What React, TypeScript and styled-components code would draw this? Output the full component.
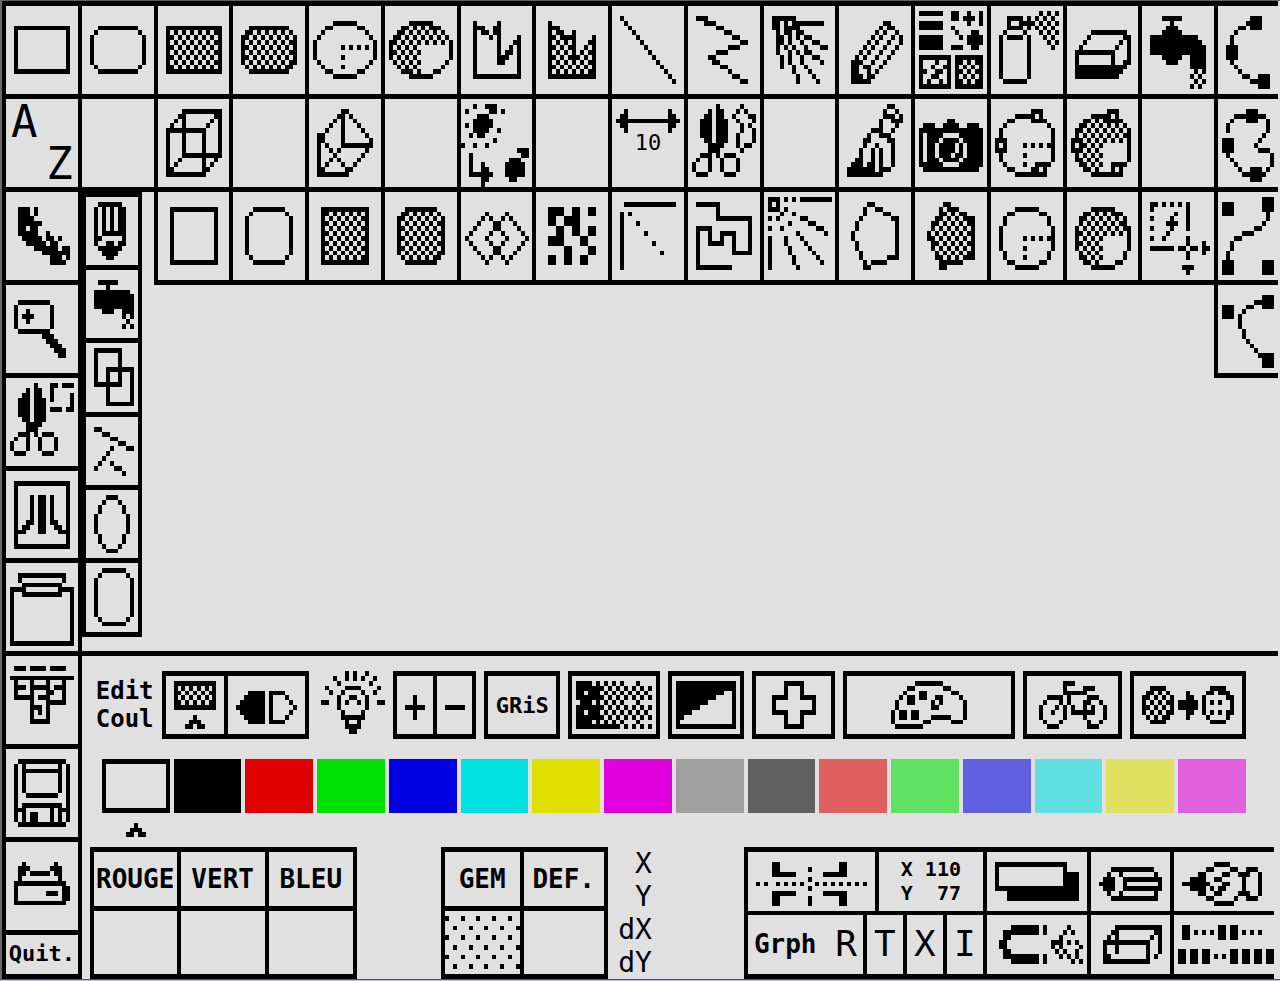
import React from "react";
import styled, { createGlobalStyle } from "styled-components";

const INK = "#000000";
const PAPER = "#e0e0e0";

const GlobalStyle = createGlobalStyle`
  *, *::before, *::after { box-sizing: border-box; }
  html, body { margin: 0; background: ${PAPER}; }
  body { color: ${INK}; font-family: "DejaVu Sans Mono", "Liberation Mono", monospace; }
  button { font: inherit; color: inherit; }
`;

/* ---------- pixel art ---------- */

/*
 * A drawing is a list of "rows:columns" groups. Rows and columns are
 * comma separated numbers or ranges; "~" dithers a column range with the
 * odd checker phase and "^" with the even one.
 */
const range = (s: string): [number, number] => {
  const [a, b] = s.split("-").map(Number);
  return [a, b === undefined ? a : b];
};

const toPath = (art: string): string => {
  let d = "";
  for (const group of art.trim().split(/\s+/)) {
    const [rows, cols] = group.split(":");
    for (const r of rows.split(",")) {
      const [y0, y1] = range(r);
      for (let y = y0; y <= y1; y++) {
        for (const c of cols.split(",")) {
          const phase = c[0] === "~" ? 1 : c[0] === "^" ? 0 : -1;
          const [x0, x1] = range(phase < 0 ? c : c.slice(1));
          if (phase < 0) {
            d += `M${x0} ${y}h${x1 - x0 + 1}v1h-${x1 - x0 + 1}z`;
          } else {
            for (let x = x0; x <= x1; x++) {
              if ((x + y) % 2 === phase) d += `M${x} ${y}h1v1h-1z`;
            }
          }
        }
      }
    }
  }
  return d;
};

const Svg = styled.svg`
  display: block;
  width: 100%;
  height: 100%;
  min-width: 0;
  min-height: 0;
  fill: ${INK};
  shape-rendering: crispEdges;
`;

const Pixels = ({ art, w = 18, h = 18 }: { art: string; w?: number; h?: number }) => (
  <Svg viewBox={`0 0 ${w} ${h}`} preserveAspectRatio="none" aria-hidden="true">
    <path d={toPath(art)} />
  </Svg>
);

const SCISSORS =
  "1:7 2:5,7-8 3:4-5,7-8 4-7:3-5,7-9 8:4-5,7-9 9:5-8 10:5-7 11:3-5,7,9-11 12:2,5,8,12 13-14:1,5,8,12 15:2-4,9-11";
const ROUND_SHELL = "3,15:6-11 4,14:4-5,12-13 5-6,12-13:3,14 7-11:2,15";

const ART = {
  rect: "4,13:2-15 5-12:2,15",
  round: "4,13:4-13 5,12:3,14 6-11:2,15",
  rectFill: "4,13:2-15 5-12:2,~3-14,15",
  roundFill: "4,13:4-13 5,12:3,~4-13,14 6-11:2,~3-14,15",
  pie: "3,14:6-11 4,13:4-5,12-13 5,12:3,14 6,11:2,15 7-10:1,16 8:8,10,12,14 10,12:8",
  pieFill:
    "3,14:6-11 4:4-5,~6-11,12-13 5:3,~4-13,14 6:2,~3-14,15 7:1,~2-15,16 8-10:1,~2-8,16 11:2,~3-8,15 12:3,~4-8,14 13:4-5,~6-8,12-13",
  curve:
    "3-14:3 3:9 4:4-5,8-9 5:5-6,8-9 6:7,9,14 7:9,13-14 8:9,12,14 9:9,11-12,14 10:9-11,14 11:9-10,14 12-13:14 14:3-14",
  curveFill:
    "3-14:3 4:4-5 5:^4,5-6,9 6:^4-5,6-9,14 7:^4-8,9,13-14 8:^4-8,9,12,^13,14 9:^4-8,9,11,^12-13,14 10:^4-8,9-10,^11-13,14 11-13:^4-13,14 14:3-14",
  line: "2:2 3:3 4:4 5:5 6:6 7:7 8:8 9:9 10:10 11:11 12:12 13:13 14:14 15:15",
  zigzag: "2:2-4 3:4-6 4:7-8 5:9-10 6:11-12 7:13-14 8:10-12 9:7-9 10:5-6 11:6-7 12:8-9 13:10 14:11-12 15:13-14",
  rays:
    "2:2-7 3:2-3,5,7-14 4:2-3,5-8 5:3,5-6,8-9 6:3-4,6,8,10-11 7:3-4,6,9,12-13 8:3,5,7,10,14-15 9:3,6,8,10-11 10:4,6,9,12-13 11:4,6,9,14 12:4,7,10 13:7,11 14:8,12 15:8,13",
  pencil:
    "3:11-12 4:10,12-13 5:9,11,14 6:8,10,13,15 7:7,9,12,15 8:6,8,11,14 9:5,7,10,13 10:4,6,9,12 11:3-5,8,11 12:3-4,6-7,10 13:3-4,7,9 14:3-5,7-8 15:3-7",
  options:
    "1,3-4,6-8:1-6 1-2:9-10 1,3:13 2:12-14 1-3:16 4:9 5:10 6:11 5,8:14-15 6-7:13-16 8:9-11 10,16:1-8,10-16 11-15:1,8,10,^11-15,16 11:5 12:4,7 13:2,5-6 14:4-5 15:3,6",
  spray: "2,4:4-7 3:4,7-10 2,4:9 5:3,8 6:4-7 6-14:2,9 15:3-8 1:~12-16 2:~11-16 3-4:~11-16 5:~12-16 6:~13-16 7:~14-16 8:15",
  eraser: "5:6-14 6:5,14-15 7:4,13,15 8:3,12,15 9:2-11,15 10:2,11,15 11:2,11,14-15 12:2-14 13:2-13 14:2-12",
  tap: "2:5-9 3:7 4:6-8 5:5-9 6:2-13 7:2-14 8-9:2-15 10:5-9,12-15 11:6-8,12-15 12:12-15 13-16:^12-15",
  bezier1: "2-4:8-10 3:7 4:5-6 5:4 6-7:3 8-10:2-4 11:3 12:4 13:5 14:6-7 15:8-9 14-16:10-12",
  cube: "2,11:6-15 3-10:6,15 6,15:2-11 7-14:2,11 3:5,14 4:4,13 5:3,12 12:5,14 13:4,13 14:3,12",
  prism:
    "2:8-9 3:7-8,10 4:6,8,11 5:5,8,12 6:4,8,13 7:2-3,8,14 8:2-3,8,15 9:2,4,8-15 10:2,5,7,14 11:2,6,13 12:2,5,7,12 13:2,4,8,11 14:2-3,9-10 15:2-9",
  bombs:
    "1:3,6-8 2:1,7-8,10 3:4-6 4:3-7 5:1,3-7 6:3-6,9 7:2,4-5 8:8 9:0,3,6 10:14-16 11:2,15-16 12:2,12-14 13-15:2,11-15 13:5 14:5-6 15:2-7 16:5-6,12-13 17:5",
  span: "0,4:3,14 1,3:2-3,14-15 2:1-16",
  lasso:
    SCISSORS + " 1:13 2:12,14 3:11,15-16 4:12,16 5:13,15 6:13,16 7-8:12,16 9:12,14-15 10:13",
  brush:
    "1:12-13 2:11,14 3:11-13,15 4:10,13-15 5:10,14 6:8-10,13 7:7,10-12 8:6-7,12-13 9:6,9,13 10:5,8,10,13 11:5,8,10,13 12:4-5,8,10,13 13:3-5,7-8,10,13 14:2-8,10-12 15:2-10",
  camera:
    "4:8-9 5:2-4,7-10,13-15 6:1-16 7:1,3-6,11-16 8:1,3-5,7-10,12-16 9-10:1,3-4,6-9,11,13-16 11:1,3-4,6-8,10-11,13-16 12:1,3-5,7-10,12-16 13:1-6,11-16 14:2-15",
  arc: "2:10-12 3:6-10,12 4:4-5,10-13 5:3,14 6-7:2,15 8,10:1-3,15 9:1,3,8,10,12,14-15 11:2,8,15 12:2,15 13:3,8,11-14 14:4-5,10-11,13 15:6-13",
  arcFill:
    "2:10-12 3:6-10,12 4:4-5,~6-9,10-13 5:3,~4-13,14 6-7:2,~3-14,15 8:1-3,~4-14,15 9:1,3,~4-8,15 10:1-3,~4-8,15 11-12:2,~3-8,15 13:3,~4-8,11-14 14:4-5,~6-8,11,13 15:6-13",
  bezier2: "2-4:7-9 3:4-6,10-11 4:3,12 5-6:2,12 7:11 8-10:1-3 8:10 9:9 10:10-12 11:2,13 12:3,13 13:4,13 14:5,8-10,12 15:6-11 16:8-10",
  film: "3-4:3-5,7 5:3-6 6:3-8 7:3-4,6-7 8:3-7,10 9:4-8,10-11,13 10:5-9,11-12 11:7-12,14-15 12:9-15 13:11-13,15 14:11-14",
  tallRect: "3,14:3-14 4-13:3,14",
  tallRound: "3,14:5-12 4,13:4,13 5-12:3,14",
  tallRectFill: "3,14:3-14 4-13:3,^4-13,14",
  tallRoundFill: "3,14:5-12 4,13:4,~5-12,13 5-12:3,~4-13,14",
  diamonds:
    "4,14:6,11 5,13:5,7,10,12 6,12:4,8-9,13 7,11:3,8-9,14 8,10:2,7,10,15 9:1,6,11,16",
  mosaic: "3-4:3-6,9-10,13-14 5-6:3-4,7-10 7-8:5-6,9-10,13-14 9-10:3-6,11-12 11-12:7-8,13-14 13-14:3-4,7-8,11-12",
  fan: "2:3-15 4-15:2 4:4 6:6 8:8 10:10 12:12",
  maze: "2:2-7 3-4:7 5:7-15 6-11:15 12:11-15 9-11:11 8:8-11 9:8 10:5-8 8-9:5 7:2-5 8-14:2 15:2-10",
  burst:
    "1,3:1-3 2:1,3 1:5,7,9-16 3:5 4:4,7 5:1,3,9-10 6:6,11-12 7:1,4,13-14 8:8,15 9-15:1 9:5,9 10:5,10 11:6,11 12:6,12 13:7,13 14:7,14 15:8",
  poly: "2:7-8 3:6,9-10 4:6,11-12 5:5,13-14 6-12:14 6-7:4 8-9:3 10-11:4 12:5 13:5,12-14 14:6,8-11 15:6-7",
  polyFill:
    "2:7-8 3:6,~7-8,9-10 4:6,~7-10,11-12 5:5,~6-12,13-14 6-7:4,~5-13,14 8-9:3,~4-13,14 10-11:4,~5-13,14 12:5,~6-13,14 13:5,~6-11,12-14 14:6,~7,8-11 15:6-7",
  circle: ROUND_SHELL + " 9:8,10,12,14 11,13:8",
  circleFill:
    ROUND_SHELL + " 4:~6-11 5-6:~4-13 7-8:~3-14 9-11:~3-8 12-13:~4-8 14:~6-8",
  block: "2:2-3,5,7,9 2-7:11 3,5,7,9:2 4:8 5:7 6:6-8 7:7 8:6 9:5 11:2-7,9-10,12-13 9-10:11 12-13:11 10-12:15 11:16 15:10-12 16:11",
  bezier3: "2-4:1-3 1-3:11-13 4-5:12 6:11 7:9-10 8:6-8 9:4-5 10-11:3 12-13:2 14-16:1-3,11-13",
  bezier4: "4-6:1-3 2-4:11-13 3:9-10 4:7-8 5:6 6-8:5 9-10:6 11:7 12:8 13:9 14:10 14-16:11-13",
  magnify: "3,9:3-10 4-8:2,11 5-7:5 6:4-6 10:9-11 11:10-12 12:11-13 13:12-14 14:13-14",
  cutout: SCISSORS + " 1:11-12,14-16 2-4:11 3-5:16 6:11-13,15-16",
  atari: "2,15:2-15 3-14:2,15 5-12:8-9 5-9:6,11 10:5-6,11-12 11:4-5,12-13 12:3-4,13-14",
  clip: "2:3-14 3:3,14 4,6:4-13 5:1-4,13-16 6-15:1,16 16:1-16",
  menus: "2:2-4,6-9,11-14 4:1-16 5:2,6,10,14 6:2-4,6-10,12-14 7:2,6,10-11,14 8:2-6,8-10,14 9:6,10-14 10:6-8,10 11:6,8,10 12:6,10 13:6-10",
  floppy:
    "2:3-14 3-14:2,15 3-8:4,13 4,9:5-12 11:4-13 12:3,14 12-14:4,11,13 13-14:6-7 15:3-14",
  printer: "4:4,12 5:3-5,11-13 6:3-4,6-10,12-13 7:3,13 8,12:2-14 9-11:2,14-15 10:10-12",
};

const SUB_ART = {
  pencil: "1:3-8 2-6:2,4,6,8-9 7:2,4-9 8:2-3,9 9:2,5-6,8-9 10:3-8 11:4-7 12:5-6",
  tap: "2:3-7 3:5 4:2-10 5-6:2-11 7:2-11 8:4-6,9-11 9-11:^9-11",
  overlap: "1,8:2-8 2-7:2,8 5,12:5-11 6-11:5,11",
  lines: "2:2-3 3:4-5 4:6-7 5:8-9 6:6,10-11 7:5 8:4 9:3,6 10:2,7-8 11:9",
  ellipse: "1,12:5-7 2,11:4,8 3-4,9-10:3,9 5-8:2,10",
  round: "1,12:4-9 2,11:3,10 3-10:2,11",
};

const BAR_ART = {
  screen: "1,6:2-12 2-5:2,^3-11,12 8:7 9:6-8 10:5-6,8-9",
  mirror: "3,9:5-8,10-13 4,8:4-8,10,14 5,7:3-8,10,15 6:2-8,10,16",
  bulb:
    "0:7,9,12 1:4,7,9,11,14 2:5,13 3:2,7-10,15 4:3,6,11,14 5:5,8-9,12 6:1-2,5,7,10,12,15-16 7:5,12 8:6,11 9:6-11 10:7,10 11:7-10 12:8-9",
  plus: "4-8:4 6:2-6",
  minus: "6:2-6",
  fade:
    "1,9:1-4,6,8,10,12,16 5:2-4,6,8,10,12,16 2,4,6,8:1-7,9,11,13,15,17,19 3,7:1-2,4-6,8,10,12,14,16,18 10:1-11,13,15,17,19",
  contrast:
    "1-2:1-15 3:1-12 4:1-10 5:1-8 6:1-6 7:1-4 8:1-2 9:1 3-9:15 10:1-15",
  cross: "1,10:7-11 2-3,8-9:7,11 4,7:4-7,11-14 5-6:4,14",
  palette:
    "1:17-23 2:15-16,24-25 3:14,18-19,26-27 4:13,15-16,18-19,22-23,28 5:12,15-16,21,23,29 6:12,21-22,29 7:11,13-14,16-17,29 8:11,13-14,16-17,21-25,29 9:11,19-20,26-28 10:12-18",
  bike:
    "1:9-11 2:9,14-16 3:9-14 4:5-8,10,15-17 5:4,8,10,14-15,18 6:3,7,9,11,14,16,19 7:3,6,9,11-16,19 8:3,9,14,19 9:4,8,15,18 10:5-7,15-17",
  swap:
    "2,9:4-7,19-22 3,8:3,~4-7,8,18,23 4-7:2,~3-8,9,17,24 3-8:13 4-7:14 5-6:11-15 3:19,21-22 4,7:23 5,7:19,21",
};

const CORNER_ART = {
  cut:
    "2-3:6-7,23-24 3:15 4:6-11,19-24 5:15 6:2,4,7,9,11,13,17,19,21,23,25,27,29 7:15 8:6-11,19-24 9-10:6-7,15,23-24",
  card: "2:2-19 3:2,19 4-6:2,19-22 7:2-22 8-9:5-22",
  pencil: "3:5-15 4:4,7,16 5:3-5,8-17 6:2-5,8,17 7:3-5,8-17 8:4,7,16 9:5-16",
  brush:
    "2:10-13 3:8-9,14-15,18-20 4:6-7,12-13,16-18,21 5:4-7,10-11,17,21 6:2-8,12-13,17,21 7:4-7,9,11-12,17,21 8:6-7,10-11,16-18,21 9:8-9,15,18-20 10:10-14",
  magnet:
    "2-3:6-12,14 3:4-5 4:4-5 5-6:3-4 7:4-5 8-9:6-12,14 8:4-5 2:20 3:19,21 4:18 5:16-18,20,22 6:16,18,23 7:17,19,22 8:18,20,22 9:21,23",
  gum: "2:6-17 3:5-6,16-17 4:4,6,15,17 5:3-14,17 6-7:3,6,14,17 8:3-4,14,16 9:3-14",
  dashes: "2-4:2-3,11-12,14-15 3:5,7,9,17,19,21 7-9:1-2,4-5,7-8,14-15,17-18,20-21,23-24 8:10,12",
  hatch: "1,5,9:0,4,8,12,16 3,7,11:2,6,10,14,18",
};

/* ---------- layout ---------- */

const Page = styled.div`
  min-height: 100vh;
  display: flex;
  flex-direction: column;
  border-top: 1px solid #606060;
  border-left: 2px solid #6a6a6a;
`;

const Screen = styled.main`
  flex: 1;
  margin-right: 2px;
  display: grid;
  grid-template-columns: repeat(16, minmax(0, 19fr)) minmax(0, 16fr);
  grid-template-rows: repeat(10, minmax(92px, 19fr)) minmax(44px, 10fr);
`;

const Tool = styled.button<{ $row: number; $col: number; $open?: boolean }>`
  grid-row: ${(p) => p.$row};
  grid-column: ${(p) => p.$col};
  display: grid;
  min-width: 0;
  padding: 0;
  background: ${PAPER};
  border: 0 solid ${INK};
  border-left-width: 4px;
  border-top-width: 5px;
  border-bottom-width: ${(p) => (p.$open ? "5px" : "0")};
  margin-bottom: ${(p) => (p.$open ? "-5px" : "0")};
`;

const Letters = styled.span`
  display: flex;
  flex-direction: column;
  justify-content: center;
  padding: 0 5px;
  font-size: 44px;
  line-height: 42px;
  text-align: left;
`;

const LetterEnd = styled.span`
  align-self: flex-end;
`;

const Measure = styled.span`
  display: grid;
  grid-template-rows: 24px 28px;
  padding-top: 10px;
  font-size: 22px;
  line-height: 20px;
`;

const QuitTool = styled(Tool)`
  padding: 0 0 2px;
  font-size: 22px;
  font-weight: bold;
  line-height: 34px;
  place-content: center;
  border-bottom-width: 5px;
`;

const Gutter = styled.div`
  grid-row: 4 / span 4;
  grid-column: 2;
  border-left: 4px solid ${INK};
`;

const Canvas = styled.section`
  grid-row: 4 / span 4;
  grid-column: 3 / span 15;
  border-top: 5px solid ${INK};
`;

const SubMenu = styled.nav`
  grid-row: 3 / span 5;
  grid-column: 2;
  align-self: start;
  justify-self: start;
  z-index: 1;
  width: 60px;
  height: 445px;
  margin: 5px 0 0 4px;
  display: grid;
  grid-template-rows: repeat(6, 1fr);
  border: 0 solid ${INK};
  border-width: 0 4px 5px;
`;

const SubTool = styled.button`
  display: grid;
  min-height: 0;
  padding: 0;
  background: ${PAPER};
  border: 0 solid ${INK};
  border-top-width: 5px;
`;

const Panel = styled.section`
  grid-row: 8 / span 4;
  grid-column: 2 / span 16;
  display: flex;
  flex-direction: column;
  padding-top: 15px;
  border-left: 4px solid ${INK};
  border-top: 5px solid ${INK};
`;

const Toolbar = styled.div`
  display: grid;
  grid-template-columns: 58fr 148fr 68fr 84fr 76fr 92fr 76fr 84fr 172fr 100fr 116fr;
  gap: 8px;
  height: 68px;
  padding: 0 32px 0 14px;
`;

const BarLabel = styled.h2`
  margin: 0;
  align-self: center;
  font-size: 24px;
  line-height: 28px;
  font-weight: bold;
  white-space: pre-line;
`;

const Group = styled.div<{ $cols: string }>`
  display: grid;
  grid-template-columns: ${(p) => p.$cols};
  min-width: 0;
  border: 0 solid ${INK};
  border-width: 5px 4px;
`;

const BarButton = styled.button<{ $plain?: boolean }>`
  display: grid;
  min-width: 0;
  min-height: 0;
  padding: 0;
  place-content: stretch;
  background: none;
  border: 0 solid ${INK};
  border-width: ${(p) => (p.$plain ? "0" : "5px 4px")};
`;

const BarText = styled.span`
  align-self: center;
  font-size: 22px;
  font-weight: bold;
`;

const Part = styled.button`
  display: grid;
  place-content: stretch;
  min-width: 0;
  min-height: 0;
  padding: 0;
  background: none;
  border: 0 solid ${INK};
  & + & { border-left-width: 4px; }
`;

const Swatches = styled.div`
  display: grid;
  grid-template-columns: repeat(16, 1fr);
  column-gap: 4px;
  margin-top: 20px;
  padding: 0 32px 0 20px;
`;

const Swatch = styled.button<{ $color: string; $picked: boolean }>`
  height: 54px;
  padding: 0;
  background: ${(p) => p.$color};
  border: 0 solid ${INK};
  border-width: ${(p) => (p.$picked ? "5px 4px" : "0")};
`;

const Marker = styled.div`
  width: 20px;
  height: 14px;
  margin: 10px 0 8px 44px;
`;

const Bottom = styled.div`
  display: grid;
  grid-template-columns: 267fr 84fr 167fr 4fr 40fr 92fr 530fr;
  height: 132px;
  margin-top: auto;
  padding: 0 4px 0 8px;
`;

const ValueTable = styled.table<{ $col: number; $first: number }>`
  grid-column: ${(p) => p.$col};
  width: 100%;
  height: 100%;
  table-layout: fixed;
  border-collapse: separate;
  border-spacing: 0;
  border: 0 solid ${INK};
  border-width: 5px 4px;

  th, td {
    padding: 0;
    border: 0 solid ${INK};
    font-size: 26px;
    line-height: 30px;
  }
  th { height: 54px; }
  th:first-child { width: ${(p) => p.$first}%; }
  td { border-top-width: 5px; height: 68px; }
  th + th, td + td { border-left-width: 4px; }
`;

const HatchBox = styled.div`
  height: 63px;
`;

const Coords = styled.div`
  grid-column: 5;
  display: flex;
  flex-direction: column;
  align-items: flex-end;
  font-size: 28px;
  line-height: 33px;
`;

const Corner = styled.div`
  grid-column: 7;
  display: grid;
  grid-template-rows: 59px 63px;
  border: 0 solid ${INK};
  border-width: 5px 0 5px 4px;
`;

const CornerRow = styled.div<{ $cols: string }>`
  display: grid;
  grid-template-columns: ${(p) => p.$cols};
  min-height: 0;
  & + & { border-top: 4px solid ${INK}; }
`;

const Position = styled.span`
  display: grid;
  grid-template-columns: auto auto;
  justify-content: center;
  align-content: center;
  column-gap: 12px;
  font-size: 20px;
  font-weight: bold;
  line-height: 24px;
  text-align: right;
`;

const Mode = styled.span`
  display: flex;
  align-items: center;
  justify-content: space-between;
  padding: 0 6px;
  font-size: 26px;
  font-weight: bold;
`;

const BigLetter = styled.span`
  align-self: center;
  font-size: 36px;
  font-weight: normal;
  line-height: 40px;
`;

const Edge = styled.footer`
  height: 2px;
  margin-left: -2px;
  background: #b4c6de;
  border-top: 1px solid #4a5464;
`;

/* ---------- data ---------- */

type ArtName = keyof typeof ART;
type Entry = [number, string, ArtName | null];

const ROWS: Entry[][] = [
  [
    [1, "Rectangle", "rect"], [2, "Rounded rectangle", "round"], [3, "Filled rectangle", "rectFill"],
    [4, "Filled rounded rectangle", "roundFill"], [5, "Ellipse sector", "pie"], [6, "Filled sector", "pieFill"],
    [7, "Polyline shape", "curve"], [8, "Filled shape", "curveFill"], [9, "Line", "line"], [10, "Polyline", "zigzag"],
    [11, "Rays", "rays"], [12, "Pencil", "pencil"], [13, "Patterns", "options"], [14, "Spray", "spray"],
    [15, "Eraser", "eraser"], [16, "Fill", "tap"], [17, "Curve 1", "bezier1"],
  ],
  [
    [2, "Text options", null], [3, "Cube", "cube"], [4, "Cube options", null], [5, "Prism", "prism"],
    [6, "Prism options", null], [7, "Explode", "bombs"], [8, "Explode options", null],
    [10, "Lasso cut", "lasso"], [11, "Cut options", null], [12, "Brush", "brush"], [13, "Camera", "camera"],
    [14, "Arc", "arc"], [15, "Filled arc", "arcFill"], [16, "Arc options", null], [17, "Curve 2", "bezier2"],
  ],
  [
    [1, "Film", "film"], [3, "Tall rectangle", "tallRect"], [4, "Tall rounded rectangle", "tallRound"],
    [5, "Filled tall rectangle", "tallRectFill"], [6, "Filled tall rounded rectangle", "tallRoundFill"],
    [7, "Diamonds", "diamonds"], [8, "Mosaic", "mosaic"], [9, "Fan", "fan"], [10, "Maze", "maze"],
    [11, "Burst", "burst"], [12, "Polygon", "poly"], [13, "Filled polygon", "polyFill"], [14, "Circle", "circle"],
    [15, "Filled circle", "circleFill"], [16, "Block", "block"], [17, "Curve 3", "bezier3"],
  ],
  [[1, "Magnify", "magnify"]],
  [[1, "Cut block", "cutout"]],
  [[1, "System", "atari"]],
  [[1, "Clipboard", "clip"]],
  [[1, "Menus", "menus"]],
  [[1, "Disk", "floppy"]],
  [[1, "Print", "printer"]],
];

const COLORS: [string, string][] = [
  ["White", "#e0e0e0"], ["Black", "#000000"], ["Red", "#e00000"], ["Green", "#00e000"],
  ["Blue", "#0000e0"], ["Cyan", "#00e0e0"], ["Yellow", "#e0e000"], ["Magenta", "#e000e0"],
  ["Light grey", "#a0a0a0"], ["Dark grey", "#606060"], ["Light red", "#e06060"], ["Light green", "#60e060"],
  ["Light blue", "#6060e0"], ["Light cyan", "#60e0e0"], ["Light yellow", "#e0e060"], ["Light magenta", "#e060e0"],
];

const SUB_TOOLS: [string, keyof typeof SUB_ART][] = [
  ["Draw", "pencil"], ["Pour", "tap"], ["Overlap", "overlap"],
  ["Strokes", "lines"], ["Oval", "ellipse"], ["Capsule", "round"],
];

export default function App() {
  return (
    <>
      <GlobalStyle />
      <Page>
        <Screen>
          {ROWS.map((row, r) =>
            row.map(([col, label, art]) => (
              <Tool key={label} $row={r + 1} $col={col} aria-label={label}>
                {art && <Pixels art={ART[art]} w={col === 17 ? 15 : 18} />}
              </Tool>
            ))
          )}
          <Tool $row={2} $col={1}>
            <Letters>
              <span>A</span>
              <LetterEnd>Z</LetterEnd>
            </Letters>
          </Tool>
          <Tool $row={2} $col={9}>
            <Measure>
              <Pixels art={ART.span} h={5} />
              <span>10</span>
            </Measure>
          </Tool>
          <QuitTool $row={11} $col={1}>Quit.</QuitTool>

          <Tool as="div" $row={3} $col={2} />
          <Gutter />
          <Canvas aria-label="Drawing" />
          <Tool $row={4} $col={17} $open aria-label="Curve 4">
            <Pixels art={ART.bezier4} w={15} />
          </Tool>

          <SubMenu aria-label="Tools">
            {SUB_TOOLS.map(([label, art]) => (
              <SubTool key={label} aria-label={label}>
                <Pixels art={SUB_ART[art]} w={13} h={14} />
              </SubTool>
            ))}
          </SubMenu>

          <Panel>
            <Toolbar>
              <BarLabel>{"Edit\nCoul"}</BarLabel>
              <Group $cols="60fr 84fr">
                <Part aria-label="Screen colours"><Pixels art={BAR_ART.screen} w={15} h={12} /></Part>
                <Part aria-label="Swap sides"><Pixels art={BAR_ART.mirror} w={19} h={12} /></Part>
              </Group>
              <BarButton $plain aria-label="Brightness"><Pixels art={BAR_ART.bulb} w={17} h={14} /></BarButton>
              <Group $cols="36fr 40fr">
                <Part aria-label="Brighter"><Pixels art={BAR_ART.plus} w={9} h={12} /></Part>
                <Part aria-label="Darker"><Pixels art={BAR_ART.minus} w={9} h={12} /></Part>
              </Group>
              <BarButton><BarText>GRiS</BarText></BarButton>
              <BarButton aria-label="Gradient"><Pixels art={BAR_ART.fade} w={21} h={12} /></BarButton>
              <BarButton aria-label="Contrast"><Pixels art={BAR_ART.contrast} w={17} h={12} /></BarButton>
              <BarButton aria-label="Add"><Pixels art={BAR_ART.cross} w={19} h={12} /></BarButton>
              <BarButton aria-label="Palette"><Pixels art={BAR_ART.palette} w={41} h={12} /></BarButton>
              <BarButton aria-label="Cycle"><Pixels art={BAR_ART.bike} w={23} h={12} /></BarButton>
              <BarButton aria-label="Replace"><Pixels art={BAR_ART.swap} w={27} h={12} /></BarButton>
            </Toolbar>

            <Swatches>
              {COLORS.map(([name, color], i) => (
                <Swatch key={name} aria-label={name} $color={color} $picked={i === 0} />
              ))}
            </Swatches>
            <Marker><Pixels art="0:2 1:1-3 2:0-1,3-4" w={5} h={3} /></Marker>

            <Bottom>
              <ValueTable $col={1} $first={32}>
                <thead><tr><th>ROUGE</th><th>VERT</th><th>BLEU</th></tr></thead>
                <tbody><tr><td /><td /><td /></tr></tbody>
              </ValueTable>
              <ValueTable $col={3} $first={47}>
                <thead><tr><th>GEM</th><th>DEF.</th></tr></thead>
                <tbody>
                  <tr>
                    <td><HatchBox><Pixels art={CORNER_ART.hatch} w={19} h={13} /></HatchBox></td>
                    <td />
                  </tr>
                </tbody>
              </ValueTable>
              <Coords>
                <span>X</span>
                <span>Y</span>
                <span>dX</span>
                <span>dY</span>
              </Coords>
              <Corner>
                <CornerRow $cols="127fr 108fr 104fr 83fr 104fr">
                  <Part aria-label="Crosshair"><Pixels art={CORNER_ART.cut} w={32} h={12} /></Part>
                  <Part>
                    <Position>
                      <span>X</span><span>110</span>
                      <span>Y</span><span>77</span>
                    </Position>
                  </Part>
                  <Part aria-label="Shadow"><Pixels art={CORNER_ART.card} w={25} h={12} /></Part>
                  <Part aria-label="Pen"><Pixels art={CORNER_ART.pencil} w={20} h={12} /></Part>
                  <Part aria-label="Paint brush"><Pixels art={CORNER_ART.brush} w={25} h={12} /></Part>
                </CornerRow>
                <CornerRow $cols="115fr 40fr 40fr 40fr 104fr 83fr 104fr">
                  <Part><Mode>Grph <BigLetter>R</BigLetter></Mode></Part>
                  <Part><BigLetter>T</BigLetter></Part>
                  <Part><BigLetter>X</BigLetter></Part>
                  <Part><BigLetter>I</BigLetter></Part>
                  <Part aria-label="Magnet"><Pixels art={CORNER_ART.magnet} w={25} h={12} /></Part>
                  <Part aria-label="Gum"><Pixels art={CORNER_ART.gum} w={20} h={12} /></Part>
                  <Part aria-label="Line style"><Pixels art={CORNER_ART.dashes} w={25} h={12} /></Part>
                </CornerRow>
              </Corner>
            </Bottom>
          </Panel>
        </Screen>
        <Edge />
      </Page>
    </>
  );
}
